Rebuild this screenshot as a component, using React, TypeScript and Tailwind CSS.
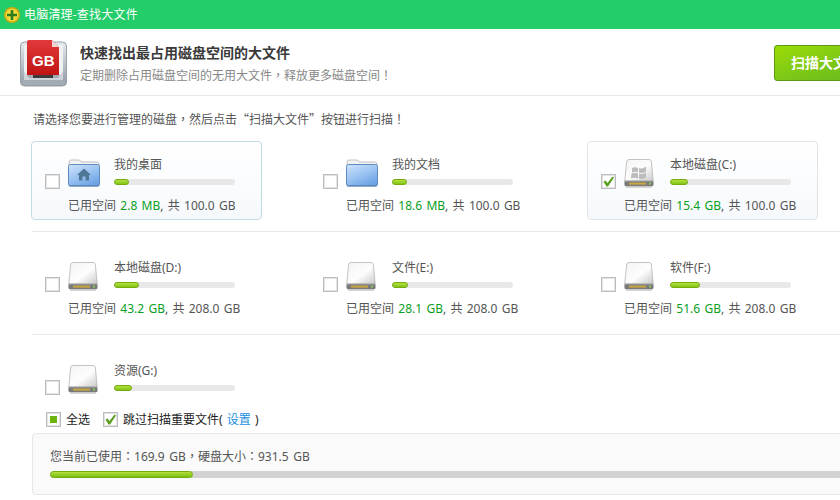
import React from "react";

type Drive = {
  name: string;
  icon: "home" | "docs" | "win" | "hdd";
  used?: string;
  total?: string;
  fill: number;
  checked?: boolean;
  boxed?: "blue" | "gray";
};

const rows: Drive[][] = [
  [
    { name: "我的桌面", icon: "home", used: "2.8 MB", total: "100.0 GB", fill: 15, boxed: "blue" },
    { name: "我的文档", icon: "docs", used: "18.6 MB", total: "100.0 GB", fill: 15 },
    { name: "本地磁盘(C:)", icon: "win", used: "15.4 GB", total: "100.0 GB", fill: 18, checked: true, boxed: "gray" },
  ],
  [
    { name: "本地磁盘(D:)", icon: "hdd", used: "43.2 GB", total: "208.0 GB", fill: 25 },
    { name: "文件(E:)", icon: "hdd", used: "28.1 GB", total: "208.0 GB", fill: 16 },
    { name: "软件(F:)", icon: "hdd", used: "51.6 GB", total: "208.0 GB", fill: 30 },
  ],
];

// centred full-width punctuation, as the original font draws it
function P({ children }: { children: string }) {
  return <span className="font-['Noto_Sans_CJK_TC',sans-serif]">{children}</span>;
}

function Check() {
  return (
    <svg width="13" height="13" viewBox="0 0 13 13">
      <path d="M1.5 6.5 L3.5 5.5 L5.5 8 L10.5 1.5 L12 2.5 L6 11.5 L4.5 11.5 Z" fill="#5a9e1e" />
    </svg>
  );
}

function CheckBox({ checked, mixed }: { checked?: boolean; mixed?: boolean }) {
  return (
    <div className="w-[15px] h-[15px] border border-[#bdbdbd] bg-white flex items-center justify-center shrink-0 shadow-[inset_0_0_0_1px_#e4e4e4]">
      {checked && <Check />}
      {mixed && <div className="w-[7px] h-[7px] bg-[#6db40f]" />}
    </div>
  );
}

function Folder({ home }: { home?: boolean }) {
  const id = home ? "folderHome" : "folderDocs";
  return (
    <svg width="32" height="28" viewBox="0 0 32 28">
      <defs>
        <linearGradient id={id} x1="0" y1="0" x2="0.6" y2="1">
          <stop offset="0" stopColor="#cfe3fa" />
          <stop offset="0.55" stopColor="#9cc4f2" />
          <stop offset="1" stopColor="#6fa5e6" />
        </linearGradient>
      </defs>
      <path d="M1 4 Q1 1 3 1 H11 L14 3 H29 Q31 3 31 5 V9 H1 Z" fill="#f2f2f2" stroke="#b4b4b4" strokeWidth="0.8" />
      <rect x="0.5" y="5.5" width="31" height="21.5" rx="2" fill={`url(#${id})`} stroke="#5f8cc0" />
      <rect x="1" y="26" width="30" height="1.5" fill="#5a7fa8" opacity="0.7" />
      {home && (
        <path d="M16 9.5 L23 16 H21 V21.5 H17.5 V17.5 H14.5 V21.5 H11 V16 H9 Z" fill="#4f7897" />
      )}
    </svg>
  );
}

function Hdd({ win }: { win?: boolean }) {
  return (
    <svg width="30" height="30" viewBox="0 0 30 30">
      <defs>
        <linearGradient id="hddBody" x1="0" y1="0" x2="1" y2="1">
          <stop offset="0" stopColor="#f4f4f4" />
          <stop offset="0.55" stopColor="#fdfdfd" />
          <stop offset="1" stopColor="#c9c9c9" />
        </linearGradient>
      </defs>
      <path d="M2.6 3 Q2.8 0.5 5 0.5 H25 Q27.2 0.5 27.4 3 L29.2 22 H0.8 Z" fill="url(#hddBody)" stroke="#b5b5b5" strokeWidth="0.8" />
      <path d="M0.6 22 H29.4 L29.6 25 Q29.6 27.5 27 27.5 H3 Q0.4 27.5 0.4 25 Z" fill="#7a7a7a" />
      <rect x="1" y="21.5" width="28" height="1" fill="#a8a8a8" />
      <rect x="5" y="23.6" width="17" height="2" fill="#c9a93f" />
      <rect x="25" y="23.6" width="2" height="2" fill="#86c95a" />
      <rect x="2" y="27.5" width="26" height="1.5" fill="#d6d6d6" />
      {win && (
        <g fill="#bcbcbc">
          <path d="M8 9 Q11 7.5 14 9 V13.5 Q11 12 8 13.5 Z" />
          <path d="M15 9 Q18.5 10.5 22 7.5 V12.5 Q18.5 15 15 13.5 Z" />
          <path d="M7.5 14.5 Q11 13 14 14.5 V19.5 Q11 18 7 19.5 Z" />
          <path d="M15 14.5 Q18.5 16 22 13.5 V18.5 Q18.5 21 15 19.5 Z" />
        </g>
      )}
    </svg>
  );
}

function DriveIcon({ icon }: { icon: Drive["icon"] }) {
  if (icon === "home") return <Folder home />;
  if (icon === "docs") return <Folder />;
  return <Hdd win={icon === "win"} />;
}

function DriveCard({ drive }: { drive: Drive }) {
  const border =
    drive.boxed === "blue"
      ? "border-[#c3dbe6] bg-gradient-to-b from-white to-[#f6f9fc]"
      : drive.boxed === "gray"
        ? "border-[#dfe3e6] bg-gradient-to-b from-white to-[#f6f9fc]"
        : "border-transparent";
  return (
    <div className={`w-[231px] h-[79px] border rounded-[4px] flex ${border}`}>
      <div className="pl-[13px] pt-[32px]">
        <CheckBox checked={drive.checked} />
      </div>
      <div className="ml-[8px] pt-[15px] whitespace-nowrap">
        <div className="flex h-[41px]">
          <div className="w-[46px] pt-[2px]">
            <DriveIcon icon={drive.icon} />
          </div>
          <div>
            <div className="h-4 leading-4 text-[12px] text-[#555]">{drive.name}</div>
            <div className="mt-[6px] w-[121px] h-[6px] rounded-full bg-[#e8e8e8]">
              <div
                className="h-[6px] rounded-full border border-[#74ac10] bg-gradient-to-b from-[#b5e03c] to-[#82c414]"
                style={{ width: drive.fill }}
              />
            </div>
          </div>
        </div>
        {drive.used && (
          <div className="h-4 leading-4 text-[12px] text-[#555] [word-spacing:1.2px]">
            已用空间 <span className="text-[#0aa01e]">{drive.used}</span>, 共 {drive.total}
          </div>
        )}
      </div>
    </div>
  );
}

function GbIcon() {
  return (
    <div className="relative w-[47px] h-[47px]">
      <svg width="47" height="47" viewBox="0 0 47 47">
        <defs>
          <linearGradient id="tray" x1="0" y1="0" x2="0" y2="1">
            <stop offset="0" stopColor="#e6eaee" />
            <stop offset="1" stopColor="#8f99a3" />
          </linearGradient>
          <linearGradient id="doc" x1="0" y1="0" x2="0" y2="1">
            <stop offset="0" stopColor="#e2393a" />
            <stop offset="1" stopColor="#c01414" />
          </linearGradient>
        </defs>
        <rect x="0.5" y="2" width="46" height="44" rx="4" fill="url(#tray)" stroke="#9aa2aa" />
        <rect x="4" y="5" width="39" height="30" fill="#eef0f2" />
        <path d="M7 2 Q7 0 9 0 H32 L39 7 V35 H7 Z" fill="url(#doc)" />
        <path d="M32 0 L39 7 H32 Z" fill="#f2d6d6" />
        <rect x="13" y="35" width="20" height="3" fill="#3b3b3b" />
        <path d="M4 31 L9 38 H38 L43 31 V42 Q43 44 41 44 H6 Q4 44 4 42 Z" fill="#cdd3d9" />
        <rect x="2" y="40" width="43" height="5" rx="2" fill="#a3abb3" />
      </svg>
      <span className="absolute left-[12px] top-[12px] text-white text-[15px] leading-[18px] font-bold font-['Liberation_Sans',sans-serif]">
        GB
      </span>
    </div>
  );
}

export default function App() {
  return (
    <div className="w-[840px] h-[500px] overflow-hidden bg-white font-['Noto_Sans','Noto_Sans_CJK_SC',sans-serif] text-[12px] text-[#555]">
      <div className="w-[900px]">
        <div className="h-[29px] bg-[#23cd69] flex items-center pl-[4px] text-white">
          <svg width="16" height="16" viewBox="0 0 16 16">
            <circle cx="8" cy="8" r="8" fill="#c9a90f" />
            <circle cx="8" cy="8" r="6.5" fill="#f2dc3c" />
            <path d="M6.7 3 H9.3 V6.7 H13 V9.3 H9.3 V13 H6.7 V9.3 H3 V6.7 H6.7 Z" fill="#2f7d1c" />
          </svg>
          <span className="ml-[4px] tracking-[0.2px]">电脑清理-查找大文件</span>
        </div>

        <div className="h-[67px] border-b border-[#e8e8e8] flex pl-[20px] pr-[16px] items-start">
          <div className="pt-[11px]">
            <GbIcon />
          </div>
          <div className="ml-[13px] pt-[14px]">
            <div className="h-[20px] leading-[20px] text-[14px] font-bold text-[#3a3a3a]">
              快速找出最占用磁盘空间的大文件
            </div>
            <div className="mt-[4px] h-4 leading-4 text-[#888] font-['Noto_Sans_CJK_SC',sans-serif]">
              定期删除占用磁盘空间的无用大文件<P>，</P>释放更多磁盘空间<P>！</P>
            </div>
          </div>
          <div className="ml-auto mt-[16px] w-[110px] h-[36px] rounded-[3px] border border-[#5c9a12] bg-gradient-to-br from-[#9bdc04] to-[#5fb41e] text-white text-[14px] font-bold pl-[16px] leading-[33px]">
            扫描大文件
          </div>
        </div>

        <div className="pl-[33px] pt-[15px] h-[45px] leading-4 font-['Noto_Sans_CJK_SC',sans-serif]">
          请选择您要进行管理的磁盘<P>，</P>然后点击“扫描大文件”按钮进行扫描<P>！</P>
        </div>

        {rows.map((row, i) => (
          <div key={i}>
            <div className="pl-[31px] flex gap-[47px]">
              {row.map((d) => (
                <DriveCard key={d.name} drive={d} />
              ))}
            </div>
            <div className="ml-[32px] mt-[11px] mb-[12px] border-b border-[#e8e8e8]" />
          </div>
        ))}

        <div className="pl-[31px] h-[65px] overflow-hidden">
          <DriveCard drive={{ name: "资源(G:)", icon: "hdd", fill: 18 }} />
        </div>

        <div className="pl-[46px] h-[15px] flex items-center text-[#222]">
          <CheckBox mixed />
          <span className="ml-[5px]">全选</span>
          <div className="ml-[13px]">
            <CheckBox checked />
          </div>
          <span className="ml-[5px] [word-spacing:1px]">
            跳过扫描重要文件( <span className="text-[#1c8fe0]">设置</span> )
          </span>
        </div>

        <div className="ml-[32px] mt-[6px] h-[62px] border border-[#e6e6e6] rounded-[4px] bg-[#fafafa] pl-[17px] pt-[14px]">
          <div className="h-4 leading-4 [word-spacing:1.5px]">
            您当前已使用<P>：</P>169.9 GB<P>，</P>硬盘大小<P>：</P>931.5 GB
          </div>
          <div className="mt-[7px] h-[7px] bg-[#d2d2d2] rounded-l-full">
            <div className="h-[7px] w-[143px] rounded-full border border-[#74ac10] bg-gradient-to-b from-[#b5e03c] to-[#7cbf12]" />
          </div>
        </div>
      </div>
    </div>
  );
}
